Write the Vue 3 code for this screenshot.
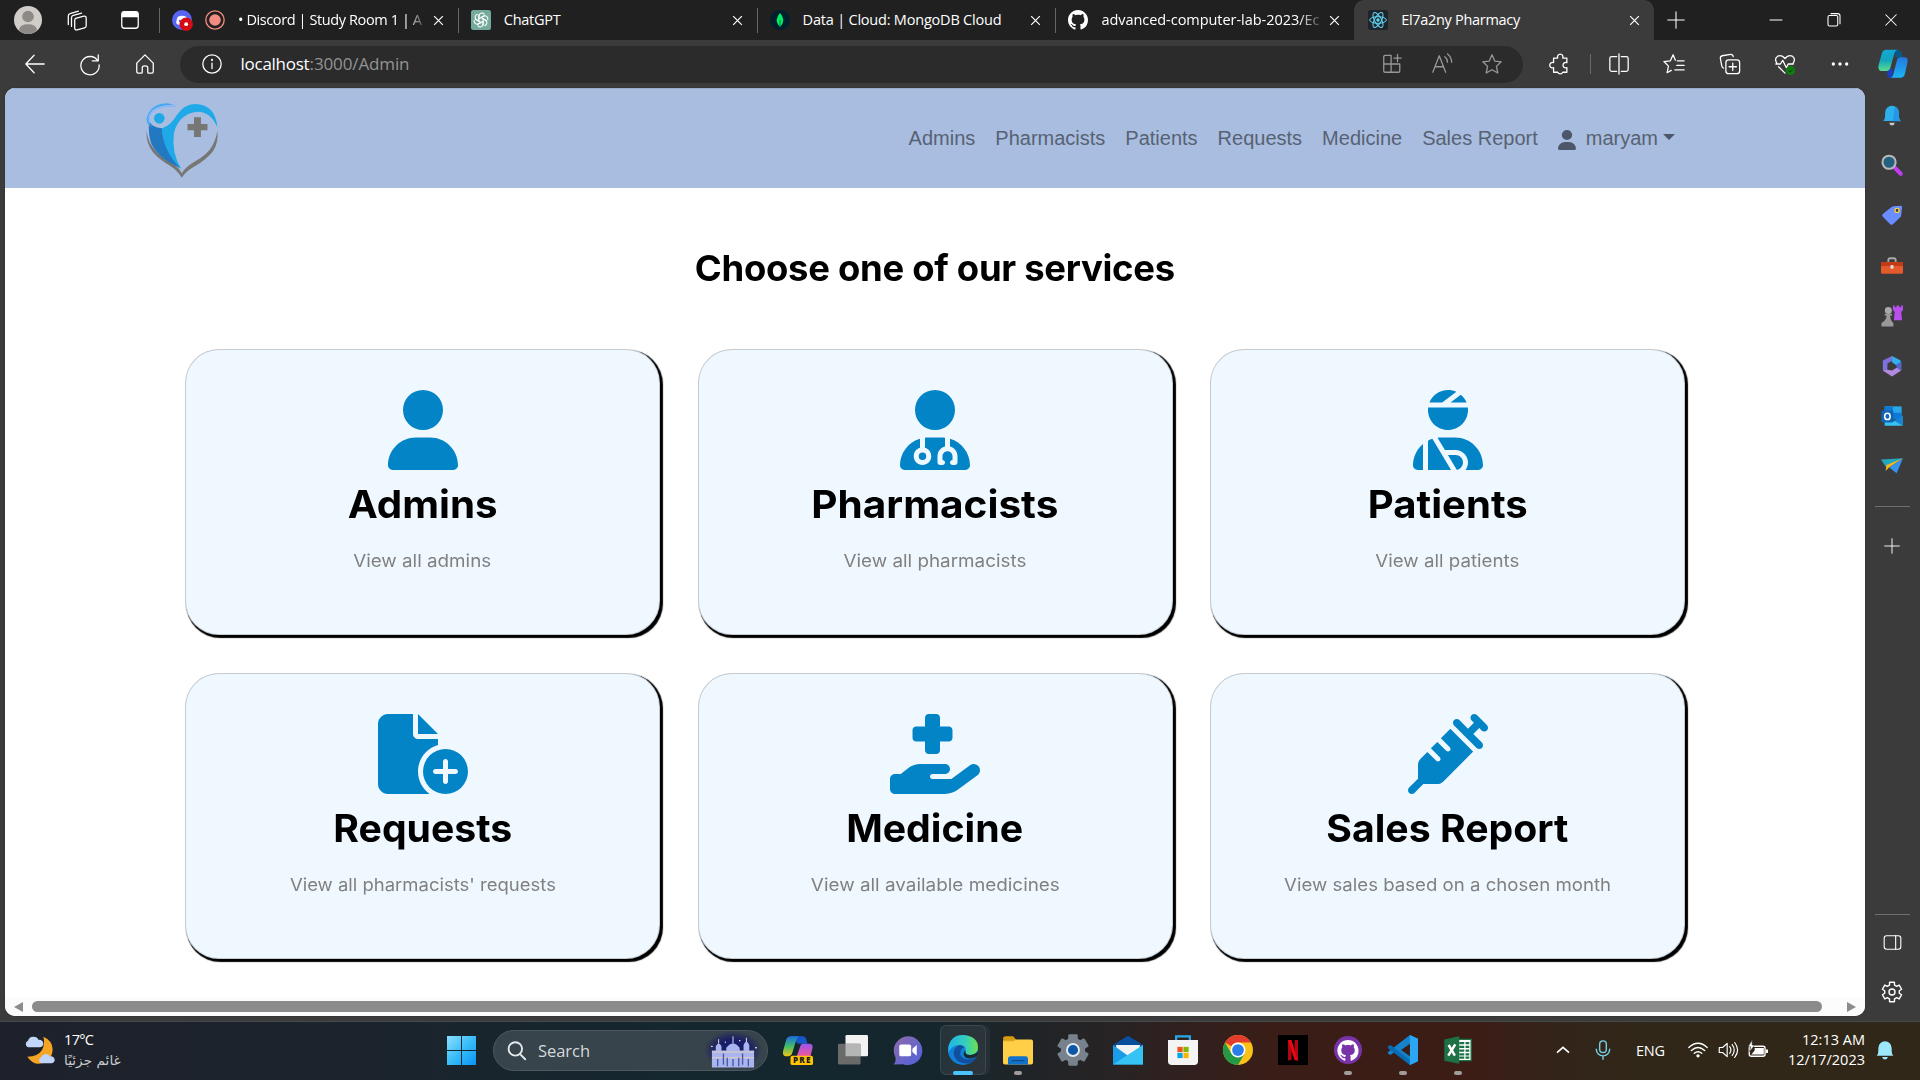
<script setup>
const vFit = {
  mounted(el, { value }) {
    const count = el.textContent.trim().length
    const natural = el.getBoundingClientRect().width
    if (!value || count < 2) return
    const spacing = (value - natural) / (count - 1)
    el.style.letterSpacing = spacing + 'px'
    el.style.marginRight = -spacing + 'px'
  }
}
// widens the glyphs themselves, keeping the text centred
const vWiden = {
  mounted(el, { value }) {
    el.style.transform = `scaleX(${value / el.getBoundingClientRect().width})`
  }
}

const tabs = [
  { title: '• Discord | Study Room 1 | A', icon: 'discord', record: true, fade: true, w: 184 },
  { title: 'ChatGPT', icon: 'gpt', w: 57 },
  { title: 'Data | Cloud: MongoDB Cloud', icon: 'mongo', w: 199 },
  { title: 'advanced-computer-lab-2023/Ec', icon: 'github', fade: true, w: 218 },
  { title: 'El7a2ny Pharmacy', icon: 'react', active: true, w: 119 }
]
const links = ['Admins', 'Pharmacists', 'Patients', 'Requests', 'Medicine', 'Sales Report']

const person = 'M224 256A128 128 0 1 0 224 0a128 128 0 1 0 0 256zm-45.7 48C79.8 304 0 383.8 0 482.3C0 498.7 13.3 512 29.7 512H418.3c16.4 0 29.7-13.3 29.7-29.7C448 383.8 368.2 304 269.7 304H178.3z'
const cards = [
  { title: 'Admins', tw: 150, text: 'View all admins', sw: 138, vw: 448, d: person },
  { title: 'Pharmacists', tw: 247, text: 'View all pharmacists', sw: 183, vw: 448, d: 'M224 256A128 128 0 1 0 224 0a128 128 0 1 0 0 256zm-96 55.2C54 332.9 0 401.3 0 482.3C0 498.7 13.3 512 29.7 512H418.3c16.4 0 29.7-13.3 29.7-29.7c0-81-54-149.4-128-171.1V362c27.6 7.1 48 32.2 48 62v40c0 8.8-7.2 16-16 16H336c-8.8 0-16-7.2-16-16s7.2-16 16-16V424c0-17.7-14.3-32-32-32s-32 14.3-32 32v24c8.8 0 16 7.2 16 16s-7.2 16-16 16H256c-8.8 0-16-7.2-16-16V424c0-29.8 20.4-54.9 48-62V304.9c-6-.6-12.1-.9-18.3-.9H178.3c-6.2 0-12.3 .3-18.3 .9v65.4c23.1 6.9 40 28.3 40 53.7c0 30.9-25.1 56-56 56s-56-25.1-56-56c0-25.4 16.9-46.8 40-53.7V311.2zM144 448a24 24 0 1 0 0-48 24 24 0 1 0 0 48z' },
  { title: 'Patients', tw: 160, text: 'View all patients', sw: 144, vw: 448, d: 'M240 80H342.7c-7.9-19.5-20.4-36.5-36.2-49.9L240 80zm37.7-68.2C261.3 4.2 243.2 0 224 0c-53.7 0-99.7 33.1-118.7 80h81.4l91-68.2zM224 256c70.7 0 128-57.3 128-128c0-5.4-.3-10.8-1-16H97c-.7 5.2-1 10.6-1 16c0 70.7 57.3 128 128 128zM124 312.4c-9.7 3.1-19.1 7-28 11.7V512H243.7L181.5 408.1 124 312.4zm33-7.2L204.3 384H272c44.2 0 80 35.8 80 80c0 18-6 34.6-16 48h82.3c16.4 0 29.7-13.3 29.7-29.7C448 383.8 368.2 304 269.7 304H178.3c-7.2 0-14.3 .4-21.3 1.3zM0 482.3C0 498.7 13.3 512 29.7 512H64V345.4C24.9 378.1 0 427.3 0 482.3zM320 464c0-26.5-21.5-48-48-48H223.5l57.1 95.2C303 507.2 320 487.6 320 464z' },
  { title: 'Requests', tw: 179, text: "View all pharmacists' requests", sw: 266, vw: 576, d: 'M0 64C0 28.7 28.7 0 64 0H224V128c0 17.7 14.3 32 32 32H384v38.6C310.1 219.5 256 287.4 256 368c0 59.1 29.1 111.3 73.7 143.3c-3.2 .5-6.4 .7-9.7 .7H64c-35.3 0-64-28.7-64-64V64zm384 64H256V0L384 128zm48 96a144 144 0 1 1 0 288 144 144 0 1 1 0-288zm16 80c0-8.8-7.2-16-16-16s-16 7.2-16 16v48H368c-8.8 0-16 7.2-16 16s7.2 16 16 16h48v48c0 8.8 7.2 16 16 16s16-7.2 16-16V384h48c8.8 0 16-7.2 16-16s-7.2-16-16-16H448V304z' },
  { title: 'Medicine', tw: 177, text: 'View all available medicines', sw: 249, vw: 576, d: 'M224 24V80H168c-13.3 0-24 10.7-24 24v48c0 13.3 10.7 24 24 24h56v56c0 13.3 10.7 24 24 24h48c13.3 0 24-10.7 24-24V176h56c13.3 0 24-10.7 24-24V104c0-13.3-10.7-24-24-24H320V24c0-13.3-10.7-24-24-24H248c-13.3 0-24 10.7-24 24zM559.7 392.2c17.8-13.1 21.6-38.1 8.5-55.9s-38.1-21.6-55.9-8.5L392.6 416H272c-8.8 0-16-7.2-16-16s7.2-16 16-16h16 64c17.7 0 32-14.3 32-32s-14.3-32-32-32H288 272 193.7c-29.1 0-57.3 9.9-80 28L68.8 384H32c-17.7 0-32 14.3-32 32v64c0 17.7 14.3 32 32 32H192 352.5c29 0 57.3-9.3 80.7-26.5l126.6-93.3z' },
  { title: 'Sales Report', tw: 242, text: 'View sales based on a chosen month', sw: 327, vw: 512, d: 'M441 7l32 32 32 32c9.4 9.4 9.4 24.6 0 33.9s-24.6 9.4-33.9 0l-15-15L417.9 128l55 55c9.4 9.4 9.4 24.6 0 33.9s-24.6 9.4-33.9 0l-72-72L295 73c-9.4-9.4-9.4-24.6 0-33.9s24.6-9.4 33.9 0l55 55L422.1 56 407 41c-9.4-9.4-9.4-24.6 0-33.9s24.6-9.4 33.9 0zM210.3 155.7l61.1-61.1c.3 .3 .6 .7 1 1l16 16 56 56 56 56 16 16c.3 .3 .6 .6 1 1l-191 191c-10.5 10.5-24.7 16.4-39.6 16.4H97.9L41 505c-9.4 9.4-24.6 9.4-33.9 0s-9.4-24.6 0-33.9l57-57V325.3c0-14.9 5.9-29.1 16.4-39.6l43.3-43.3 57 57c6.2 6.2 16.4 6.2 22.6 0s6.2-16.4 0-22.6l-57-57 41.4-41.4 57 57c6.2 6.2 16.4 6.2 22.6 0s6.2-16.4 0-22.6l-57-57z' }
]

const line = (s) => `<g fill="none" stroke="currentColor" stroke-width="1.4" stroke-linecap="round" stroke-linejoin="round">${s}</g>`
const cat = 'M8 0C3.58 0 0 3.58 0 8c0 3.54 2.29 6.53 5.47 7.59.4.07.55-.17.55-.38 0-.19-.01-.82-.01-1.49-2.01.37-2.53-.49-2.69-.94-.09-.23-.48-.94-.82-1.13-.28-.15-.68-.52-.01-.53.63-.01 1.08.58 1.23.82.72 1.21 1.87.87 2.33.66.07-.52.28-.87.51-1.07-1.78-.2-3.64-.89-3.64-3.95 0-.87.31-1.59.82-2.15-.08-.2-.36-1.02.08-2.12 0 0 .67-.21 2.2.82.64-.18 1.32-.27 2-.27s1.36.09 2 .27c1.53-1.04 2.2-.82 2.2-.82.44 1.1.16 1.92.08 2.12.51.56.82 1.27.82 2.15 0 3.07-1.87 3.75-3.65 3.95.29.25.54.73.54 1.48 0 1.07-.01 1.93-.01 2.2 0 .21.15.46.55.38A8.01 8.01 0 0 0 16 8c0-4.42-3.58-8-8-8z'
const gearPath = (() => {
  let d = ''
  for (let i = 0; i < 6; i++) {
    const pts = [[-20, 7.4], [-14, 10], [14, 10], [20, 7.4]]
    for (const [a, r] of pts) {
      const t = ((i * 60 + a - 90) * Math.PI) / 180
      d += (d ? 'L' : 'M') + (12 + r * Math.cos(t)).toFixed(2) + ' ' + (12 + r * Math.sin(t)).toFixed(2)
    }
  }
  return d + 'Z'
})()

// 24-unit icon bodies, keyed by name
const icons = {
  avatar: '<circle cx="12" cy="12" r="12" fill="#d0cdc9"/><circle cx="12" cy="9" r="5" fill="#8d8985"/><path d="M4.2 20.5Q5 15.6 12 15.6t7.8 4.9Q17 24 12 24t-7.8-3.5z" fill="#8d8985"/>',
  workspaces: line('<path d="M10.500 10.200l9-2.400q2.500-.5 2.500 2v8.400q0 1.800-1.800 2.300l-8 2.200q-2.700.6-2.700-2v-8.500q0-1.500 1-2z"/><path d="M6 19V9.500q0-2 2-2.500l9-2.600M2.500 17V7.500q0-2 2-2.500l9-2.600"/>'),
  tabmenu: line('<rect x="3" y="3" width="18" height="18" rx="3"/>') + '<path d="M3 9V5.500Q3 2.500 6 2.500h12q3 0 3 3V9z" fill="currentColor"/>',
  discord: '<circle cx="12" cy="12" r="12" fill="#5865f2"/><path d="M7 8q5-2.500 10 0 2 4 2 8-2 2-4 2l-1-1.500h-4L9 18q-2 0-4-2 0-4 2-8z" fill="#fff"/><circle cx="9.500" cy="13" r="1.400" fill="#5865f2"/><circle cx="17" cy="17" r="8" fill="#d90b12"/><circle cx="17" cy="17" r="2.300" fill="#fff"/>',
  record: '<circle cx="12" cy="12" r="11" fill="none" stroke="#f28b82" stroke-width="1.600"/><circle cx="12" cy="12" r="7" fill="#f28b82"/>',
  gpt: `<rect width="24" height="24" rx="3" fill="#74aa9c"/><g fill="none" stroke="#fff" stroke-width="1.300">${[0, 60, 120, 180, 240, 300].map((a) => `<path transform="rotate(${a} 12 12)" d="M9.500 13.500V7.200a3.600 3.600 0 0 1 6.500-2M12 9.100l4.500-2.600"/>`).join('')}</g>`,
  mongo: '<circle cx="12" cy="12" r="12" fill="#001e2b"/><path d="M12 3.500q4 4 4 8.500t-4 8q-4-3.500-4-8t4-8.500z" fill="#00ed64"/><path d="M12 12v9" stroke="#00684a" stroke-width="1"/>',
  github: `<path transform="scale(1.5)" fill="#fff" d="${cat}"/>`,
  react: '<rect width="24" height="24" rx="3" fill="#20232a"/><g fill="none" stroke="#61dafb" stroke-width="1.200"><ellipse cx="12" cy="12" rx="10" ry="4"/><ellipse cx="12" cy="12" rx="10" ry="4" transform="rotate(60 12 12)"/><ellipse cx="12" cy="12" rx="10" ry="4" transform="rotate(120 12 12)"/></g><circle cx="12" cy="12" r="2" fill="#61dafb"/>',
  close: line('<path d="M5 5l14 14M19 5L5 19"/>'),
  tabclose: '<path d="M4 4l16 16M20 4L4 20" fill="none" stroke="#fff" stroke-width="2.200"/>',
  plus: line('<path d="M12 1v22M1 12h22"/>'),
  min: line('<path d="M4 12h16"/>'),
  restore: line('<rect x="4" y="6" width="13" height="14" rx="2"/><path d="M8 3.500h9q3 0 3 3V17"/>'),
  back: line('<path d="M22 12H2M11 2.500L2 12l9 9.500"/>'),
  refresh: line('<path d="M20.500 8.500A10 10 0 1 0 22 13M21 2v6.500h-6.500"/>'),
  home: line('<path d="M3 11l9-9 9 9v9.500q0 1.500-1.500 1.500H16q-1 0-1-1v-5q0-2-3-2t-3 2v5q0 1-1 1H4.500Q3 22 3 20.500z"/>'),
  info: line('<circle cx="12" cy="12" r="10"/><path d="M12 11v6"/>') + '<circle cx="12" cy="7.500" r="1.200" fill="currentColor"/>',
  apps: line('<path d="M11 2.500H4.500Q3 2.500 3 4v15.500Q3 21 4.500 21H19q1.500 0 1.500-1.500V12H3M11 2.500V21M18 1.500v8M14 5.500h8"/>'),
  aloud: line('<path d="M2 21L9 3l7 18M4.500 15h9M15 4q3 2 3 6M18 1q4.500 3.500 4.500 9"/>'),
  star: line('<path d="M12 2l3 6.800 7 .8-5.200 5 1.500 7.200L12 18.200l-6.300 3.600 1.500-7.200L2 9.600l7-.8z"/>'),
  puzzle: line('<path d="M5 5.500h4.500a3 3 0 1 1 5.500 0h4.500v5a3 3 0 1 0 0 5.500v5H15a3 3 0 0 1-5.500 0H5v-5a3 3 0 1 1 0-5.500z"/>'),
  split: line('<path d="M12 1v22M9.500 4H4Q2 4 2 6v12q0 2 2 2h5.500M14.500 4H20q2 0 2 2v12q0 2-2 2h-5.500"/>'),
  favs: line('<path d="M13.500 7.800L11 2 8 8.500l-7 .8 5 5-1.500 7.200L9 19M15.500 8.500H23M15 13.500h8M13 18.500h10"/>'),
  collect: line('<rect x="7.500" y="7.500" width="15" height="15" rx="3"/><path d="M15 11v8M11 15h8M5 16.500Q3.500 16 3 14L1.500 6Q1.200 3.500 3.500 3l9-1.500q2.500-.3 3 2.500"/>'),
  heart: line('<path d="M3 11Q0 6 4 3.500 8.500 1.500 12 6q3.500-4.500 8-2.500 4 2.500 1 7.500M2 12h5l2.500-4 4 8 2-4H21M5 15l7 7"/>') + '<circle cx="18" cy="19" r="5" fill="#107c10"/><path d="M15.500 19l2 1.800 3-3.500" stroke="#053d05" fill="none"/>',
  dots: '<g fill="currentColor"><circle cx="4" cy="12" r="2"/><circle cx="12" cy="12" r="2"/><circle cx="20" cy="12" r="2"/></g>',
  copilot: '<defs><linearGradient id="ca" x2="0" y2="1"><stop stop-color="#11a8d8"/><stop offset=".5" stop-color="#12a5bd"/><stop offset="1" stop-color="#5bdc8c"/></linearGradient><linearGradient id="cb" x2="0" y2="1"><stop stop-color="#2378e0"/><stop offset="1" stop-color="#1cb5f5"/></linearGradient></defs><path d="M13 0.500h3q2 0 2.500 2l1.200 4H14z" fill="#075a88"/><path d="M7 16h5l-1 7H9.500Q8 23 7.500 21z" fill="#1b3fc0"/><path d="M6.500 .5H16q-2 0-3 3l-3 11q-.7 3-3.500 3H3Q0 17.500 .3 13.500L3 3.500q.8-3 3.500-3z" fill="url(#ca)"/><path d="M17.500 6.500H21q3 0 2.700 3.500L21.500 20q-.8 3-3.500 3H9.500q2 0 2.800-3L15 9.500q.7-3 2.500-3z" fill="url(#cb)"/>',
  bell: '<path d="M2.500 18.500q2-2 2-6V9.500a7.500 7.500 0 0 1 15 0v3q0 4 2 6z" fill="#2fb0ee"/><path d="M15 2.700q4.500 2 4.500 7v3q0 4 2 6H13z" fill="#2497e6"/><path d="M9 20.500h6q-.5 3-3 3t-3-3z" fill="#c8c8c8"/>',
  search: '<path d="M14 14l7.500 7.500" stroke="#c13cf0" stroke-width="4.500" stroke-linecap="round"/><circle cx="8.800" cy="9" r="7.200" fill="#23617f" stroke="#b8b8b8" stroke-width="2.200"/>',
  tag: '<path d="M13.500 2.500l8-.5q1.500 0 1.500 1.500l-1 9q0 1-1 2L13 22q-1.500 1.500-3 0l-8-8q-1.500-1.500 0-3l9.500-7.800z" fill="#6a8dff"/><circle cx="17.500" cy="7" r="2.200" fill="#333" stroke="#f9cf2a" stroke-width="1.500"/>',
  toolbox: '<path d="M8 8V5.500q0-2 2-2h4q2 0 2 2V8" fill="none" stroke="#a9a9a9" stroke-width="2"/><rect y="7.500" width="24" height="13" rx="1.500" fill="#e55a2b"/><path d="M0 9q0-1.500 1.500-1.500h21Q24 7.500 24 9v3H0z" fill="#c43a16"/><rect x="10.300" y="11" width="3.400" height="4" rx="1" fill="#ddd"/>',
  chess: '<path d="M13 0.500h2v2h2v-2h3v2h2v-2h2v5l-2 2 1 9h-9l1-9-2-2z" fill="#b950ee"/><circle cx="8" cy="6" r="3.800" fill="#aaa"/><path d="M4 9.500h8v2h-2q0 5.500 3.500 8v4h-13v-4Q6 17 6 11.500H4z" fill="#999"/>',
  m365: '<path d="M12 1l9.500 5v8L16 10.500 12 8z" fill="#2eb4ec"/><path d="M12 1L2 6v11l5 3V9l6-3z" fill="#7b72dd"/><path d="M2 17l10 6.500L22 17V8l-4.500 5.500L12 17l-5-1z" fill="#b28adf"/><path d="M22 7v10.500l-5-4V10z" fill="#5367d1"/>',
  outlook: '<rect x="4" y="1.500" width="18.500" height="14" fill="#28a8ea"/><path d="M4 1.500h9v7H4zM13 8.500h9.500v7H13z" fill="#0f78d4"/><path d="M4 13l10 5 9.500-6v10.500H4z" fill="#37c2f1"/><path d="M14 17l9.500-5v10.500z" fill="#1484d7"/><rect x=".5" y="6" width="13" height="13" rx="1.500" fill="#0f64b8"/><ellipse cx="7" cy="12.500" rx="3" ry="3.400" fill="none" stroke="#fff" stroke-width="1.700"/>',
  plane: '<path d="M0 5l24-1.500L6 14z" fill="#23a7bd"/><path d="M5 17.500L6 11 24 3.500 8.500 14z" fill="#f8b41d"/><path d="M24 3.500L9 13.500l8 6.500z" fill="#3493ef"/>',
  panel: line('<rect x="1.500" y="3.500" width="21" height="17" rx="3"/><path d="M16 3.500v17"/>'),
  gear: `<path d="${gearPath}" fill="none" stroke="currentColor" stroke-width="1.400" stroke-linejoin="round"/><circle cx="12" cy="12" r="3" fill="none" stroke="currentColor" stroke-width="1.400"/>`,
  windows: '<defs><linearGradient id="wn" x2="1" y2="1"><stop stop-color="#8be0ff"/><stop offset=".5" stop-color="#39bdf8"/><stop offset="1" stop-color="#0a93f5"/></linearGradient></defs><path d="M0 0h11.600v11.600H0zM12.400 0H24v11.600H12.400zM0 12.400h11.600V24H0zM12.400 12.400H24V24H12.400z" fill="url(#wn)"/>',
  lens: '<g fill="none" stroke="#e4e8ea" stroke-width="2.400" stroke-linecap="round"><circle cx="10.500" cy="10" r="8.500"/><path d="M16.500 16.500L23 23"/></g>',
  copre: '<defs><linearGradient id="cp" x2="0" y2="1"><stop stop-color="#1c6fe0"/><stop offset=".5" stop-color="#3fbb6a"/><stop offset="1" stop-color="#f2c614"/></linearGradient><linearGradient id="cq" x2="0" y2="1"><stop stop-color="#9a55ec"/><stop offset="1" stop-color="#f0569c"/></linearGradient></defs><path d="M6 1h10q2 0 2.500 2l1 4H12z" fill="#1557c8"/><path d="M6 1h7q-2 1-3 5L7.500 14q-.8 3-3.500 3H2q-2.500-.5-2-4L2.500 4Q3.500 1 6 1z" fill="url(#cp)"/><path d="M16 7h5q3 0 2.700 3L22 17H11l2.500-7q.8-3 2.500-3z" fill="url(#cq)"/><rect x="6" y="16.500" width="18" height="7.500" rx="1.500" fill="#ffc400"/><text x="15" y="22.500" font-family="Open Sans, sans-serif" font-weight="800" font-size="6.500" text-anchor="middle" fill="#1d1d1d" textLength="14">PRE</text>',
  taskview: '<rect x="6" width="18" height="17" rx="1" fill="#f2f2f2"/><rect y="7" width="18" height="16.500" rx="1" fill="#6a6a6a"/><path d="M6 7h12v10H6z" fill="#b4b6b6"/>',
  chat: '<defs><linearGradient id="ch" x2="1" y2="1"><stop stop-color="#8f6aa8"/><stop offset="1" stop-color="#4d62e0"/></linearGradient></defs><path d="M12 1a11.500 11.500 0 1 1-4 22.300L.5 23.500q2-2 1.500-5.500A11.500 11.500 0 0 1 12 1z" fill="url(#ch)"/><rect x="5" y="7.500" width="9.500" height="9.500" rx="1.500" fill="#fff"/><path d="M15.500 11l3.500-3v8.500l-3.500-3z" fill="#fff"/>',
  edge: '<defs><linearGradient id="eg" x2="1"><stop stop-color="#1fb4e8"/><stop offset=".6" stop-color="#36cfb9"/><stop offset="1" stop-color="#6ee04b"/></linearGradient></defs><circle cx="12" cy="12" r="12" fill="#1180d8"/><path d="M.3 10Q2 0 12 0q12 1 12 10 0 5-6 6-5 0-4-3 1-5-5-5Q3 8 .3 14z" fill="url(#eg)"/><path d="M9 8Q3 11 5 17t12 6q4-1 6-6-6 4-10 2t-3-6q1-3 3-3-1-2-4-2z" fill="#124f9f"/><path d="M14 12q-1 4 4 4 3 0 6-3 0 3-1 4-5 3-9 1-3-3 0-6z" fill="#1b2a31"/>',
  folder: '<path d="M0 3q0-2 2-2h6l2.500 2.500H0z" fill="#dc9a08"/><rect y="3.500" width="24" height="20" rx="1.500" fill="#ffcf48"/><path d="M0 5h8l3-1.500H0z" fill="#e0a414"/><path d="M4 23.500V19q0-2 2-2h12q2 0 2 2v4.500z" fill="#1272cc"/><path d="M7 20.500h10" stroke="#0c4c8f" stroke-width="1"/>',
  settings: `<g transform="translate(-2.400 -2.400) scale(1.200)"><path d="${gearPath}" fill="#78828d" stroke="#78828d" stroke-width="1.500" stroke-linejoin="round"/><circle cx="12" cy="12" r="4" fill="#0c57a8" stroke="#e5e9ee" stroke-width="1.300"/></g>`,
  mail: '<path d="M0 8l12-7.500L24 8v5H0z" fill="#0a4f9e"/><path d="M2.500 8h19v10h-19z" fill="#f1f3f4"/><path d="M0 8l12 8.500L24 8v15.500H0z" fill="#1a9de6"/><path d="M0 23.500L24 8v15.500z" fill="#35c3f3"/>',
  store: '<path d="M6.500 5V1h11v4" fill="none" stroke="#27a9e8" stroke-width="1.800"/><path d="M0 4h24v17q0 3-3 3H3q-3 0-3-3z" fill="#f4f4f4"/><path d="M7.500 9.500h4.200v4.200H7.500z" fill="#f1511b"/><path d="M12.300 9.500h4.200v4.200h-4.200z" fill="#80b900"/><path d="M7.500 14.300h4.200v4.200H7.500z" fill="#00a4ef"/><path d="M12.300 14.300h4.200v4.200h-4.200z" fill="#fbb700"/>',
  chrome: '<circle cx="12" cy="12" r="12" fill="#fbc116"/><path d="M1.600 6a12 12 0 0 1 20.800 0H12q-4 0-5.200 3z" fill="#e33b2e"/><path d="M1.600 6a12 12 0 0 0 10.400 18l5.200-9Q12 20 6.800 15z" fill="#249a47"/><circle cx="12" cy="12" r="6" fill="#fff"/><circle cx="12" cy="12" r="4.700" fill="#2b7de9"/>',
  netflix: '<path d="M0 0h24v24H0z" fill="#000"/><path d="M8 4h2.800v16L8 20.300zM13.300 4H16v16.300l-2.700-.3z" fill="#b1060f"/><path d="M8 4h2.800L16 20.300l-2.800-.4z" fill="#e50914"/>',
  desktop: `<circle cx="12" cy="12" r="11.200" fill="#7a32a8"/><g transform="translate(3.500 4) scale(1.060)"><path fill="#fff" d="${cat}"/></g>`,
  vscode: '<path d="M17.500 0L24 3v18l-6.500 3L6 13 2 16 0 15v-1.500L17.500 0z" fill="#1583cc"/><path d="M17.500 24L0 10.500V9l2-1 15.500 12z" fill="#0a6bb5"/><path d="M17.500 0L24 3v18l-6.500 3z" fill="#2ba6f2"/><path d="M17.500 7v10L10.500 12z" fill="#3b1d17"/>',
  excel: '<rect x="11" y="3.500" width="11.500" height="17" fill="#fff" stroke="#1e7145"/><path d="M13 6.500h8M13 9.500h8M13 12.500h8M13 15.500h8M13 18h8" stroke="#1e7145" stroke-width="1.800"/><path d="M17.500 4v16" stroke="#fff"/><path d="M1 3.500L13 1v22L1 20.500z" fill="#1e7145"/><path d="M4.500 8l5 8.500M9.800 7.500l-5.600 9" stroke="#fff" stroke-width="2"/>',
  chev: '<path d="M3 16l9-8 9 8" fill="none" stroke="#fff" stroke-width="2.500"/>',
  mic: '<g fill="none" stroke="#76cfe6" stroke-width="1.700" stroke-linecap="round"><rect x="8" y="1" width="8" height="14" rx="4"/><path d="M4 11a8 8 0 0 0 16 0M12 19v4"/></g>',
  wifi: '<g fill="none" stroke="#fff" stroke-width="1.700" stroke-linecap="round"><path d="M1 9q11-10 22 0M4 12.500q8-7 16 0M7.500 16q4.500-4 9 0"/></g><circle cx="12" cy="19" r="2" fill="#fff"/>',
  volume: line('<path d="M1.500 9h4L11 4v16l-5.500-5h-4zM14 8q3 4 0 8M17 5.500q5 6.500 0 13M20 3q7 9 0 18"/>'),
  battery: '<rect x="1.500" y="7.500" width="19" height="12" rx="2.500" fill="none" stroke="#fff" stroke-width="1.600"/><path d="M8 9.500h11v8H4l4-5zM21.500 11.500H24v4h-2.500z" fill="#fff"/><path d="M5 0L0 8h3l-1 6 6-8H5z" fill="#fff" stroke="#302718" stroke-width=".7"/>',
  notify: '<path d="M2 19q2-2 2-6v-3.500a8 8 0 0 1 16 0V13q0 4 2 6zM8.500 20.500h7q-1 3-3.500 3t-3.500-3z" fill="#9be8fb"/>',
  weather: '<path d="M14.500 2q7 3 7 9.500T16 21q-8 4-13.500-4 8 0 11-5 2.500-5 1-10z" fill="#f5a524"/><path d="M3 10a2.700 2.700 0 0 1 0-5 4.300 4.300 0 0 1 8-.5 2.800 2.800 0 1 1 .5 5.500z" fill="#c4d5fa"/><path d="M13 22a2.500 2.500 0 0 1 0-4.700 3.600 3.600 0 0 1 6.500-.5A2.700 2.700 0 1 1 21 22z" fill="#c0d3fb"/>',
  castle: '<g fill="#a9b5ee"><path d="M1 11h22v12H1z"/><path d="M3 12V8q1.500-4 3 0v4zM8.500 12V9q3.500-6 7 0v3zM17.500 12V7q1.500-5 3 0v5z"/></g><path d="M1 12h22M1 16h22" stroke="#e8d0c0" stroke-width=".7"/><path d="M4 17v5M7 13v8M9 16v6M12 17v5M15 16v6M17 13v8M20 17v5" stroke="#4a55a8" stroke-width=".7"/><path d="M12 1v5M4.500 3v3M19 2v3" stroke="#fff" stroke-width=".5"/><g fill="#fff"><circle cx="1" cy="8" r=".5"/><circle cx="8" cy="5" r=".4"/><circle cx="15.500" cy="4" r=".4"/><circle cx="24" cy="9" r=".5"/></g>'
}

const addressActions = ['apps', 'aloud', 'star']
const toolActions = ['split', 'favs', 'collect', 'heart', 'dots']
const sideApps = ['bell', 'search', 'tag', 'toolbox', 'chess', 'm365', 'outlook', 'plane']
const taskApps = [
  { i: 'copre' }, { i: 'taskview' }, { i: 'chat' }, { i: 'edge', active: true }, { i: 'folder', run: true },
  { i: 'settings' }, { i: 'mail' }, { i: 'store' }, { i: 'chrome' }, { i: 'netflix' },
  { i: 'desktop', run: true }, { i: 'vscode', run: true }, { i: 'excel', run: true }
]
</script>

<template>
  <div class="screen">
    <header class="tabbar">
      <div class="lead">
        <svg class="i28" viewBox="0 0 24 24" v-html="icons.avatar" />
        <svg class="i22" viewBox="0 0 24 24" v-html="icons.workspaces" />
        <svg class="i22" viewBox="0 0 24 24" v-html="icons.tabmenu" />
      </div>
      <div v-for="t in tabs" :key="t.title" class="tab" :class="{ active: t.active }">
        <svg class="i20" viewBox="0 0 24 24" v-html="icons[t.icon]" />
        <svg v-if="t.record" class="i20" viewBox="0 0 24 24" v-html="icons.record" />
        <div class="tabtext" :class="{ fade: t.fade }"><span v-fit="t.w">{{ t.title }}</span></div>
        <svg class="x" viewBox="0 0 24 24" v-html="icons.tabclose" />
      </div>
      <svg class="i18 newtab" viewBox="0 0 24 24" v-html="icons.plus" />
      <div class="wincontrols">
        <svg class="i18" viewBox="0 0 24 24" v-html="icons.min" />
        <svg class="i18" viewBox="0 0 24 24" v-html="icons.restore" />
        <svg class="i18" viewBox="0 0 24 24" v-html="icons.close" />
      </div>
    </header>

    <div class="toolbar">
      <div class="slot"><svg class="i22" viewBox="0 0 24 24" v-html="icons.back" /></div>
      <div class="slot"><svg class="i22" viewBox="0 0 24 24" v-html="icons.refresh" /></div>
      <div class="slot"><svg class="i22" viewBox="0 0 24 24" v-html="icons.home" /></div>
      <div class="address">
        <svg class="i22" viewBox="0 0 24 24" v-html="icons.info" />
        <div class="url"><span v-fit="69">localhost</span><span v-fit="100" class="dim">:3000/Admin</span></div>
        <div class="actions">
          <svg v-for="a in addressActions" :key="a" class="i22" viewBox="0 0 24 24" v-html="icons[a]" />
        </div>
      </div>
      <div class="ext"><svg class="i22" viewBox="0 0 24 24" v-html="icons.puzzle" /></div>
      <i class="sep" />
      <div v-for="a in toolActions" :key="a" class="slot"><svg :class="a === 'dots' ? 'i20' : 'i22'" viewBox="0 0 24 24" v-html="icons[a]" /></div>
      <div class="cop"><svg class="i30" viewBox="0 0 24 24" v-html="icons.copilot" /></div>
    </div>

    <div class="middle">
      <main class="page">
        <nav class="navbar">
          <svg class="logo" viewBox="355 305 180 230" preserveAspectRatio="none">
            <path d="M359 390Q361 425 380 450Q396 472 420 488Q437 500 445 519Q453 500 476 484Q508 463 520 436Q531 410 532 390Q536 425 522 452Q506 478 474 500Q456 512 445 532Q435 512 418 498Q390 478 374 455Q356 425 359 390Z" fill="#777775" />
            <path d="M365 360Q370 382 397 384Q398 440 442 504Q390 476 371 432Q362 405 365 360Z" fill="#2279c1" />
            <path d="M397 384Q418 375 433 344Q450 312 478 311Q527 312 532 380Q515 333 483 334Q438 340 426 397Q419 455 444 507Q400 455 396 384Z" fill="#20a9e8" />
            <path d="M359 355Q367 310 411 309L426 314Q394 312 374 330Q363 345 365 363Q366 376 375 382Q358 374 359 355Z" fill="#46a9ee" />
            <path d="M431 318Q391 313 374 332Q361 346 367 368" fill="none" stroke="#84b6ff" stroke-width="4" />
            <ellipse cx="390" cy="354" rx="13" ry="16" fill="#20a9e8" />
            <path d="M475 351h17v20h16v19h-16v20h-17v-20h-16v-19h16z" fill="#777775" />
          </svg>
          <div class="links">
            <a v-for="l in links" :key="l">{{ l }}</a>
            <a class="user"><svg viewBox="0 0 448 512" preserveAspectRatio="none"><path :d="person" fill="currentColor" /></svg>maryam<i class="caret" /></a>
          </div>
        </nav>
        <h1><span v-widen="480">Choose one of our services</span></h1>
        <section class="cards">
          <article v-for="c in cards" :key="c.title" class="card">
            <svg :viewBox="`0 0 ${c.vw} 512`"><path :d="c.d" fill="#0284c7" /></svg>
            <h2><span v-widen="c.tw">{{ c.title }}</span></h2>
            <p><span v-widen="c.sw">{{ c.text }}</span></p>
          </article>
        </section>
        <div class="scrollbar"><i class="al" /><b /><i class="ar" /></div>
      </main>
      <aside class="side">
        <div v-for="a in sideApps" :key="a" class="sslot"><svg class="i22" viewBox="0 0 24 24" v-html="icons[a]" /></div>
        <hr class="first">
        <svg class="i16" viewBox="0 0 24 24" v-html="icons.plus" />
        <hr class="second">
        <svg class="i19 pan" viewBox="0 0 24 24" v-html="icons.panel" />
        <svg class="i24" viewBox="0 0 24 24" v-html="icons.gear" />
      </aside>
    </div>

    <footer class="taskbar">
      <div class="weather">
        <svg class="i32" viewBox="0 0 24 24" v-html="icons.weather" />
        <div><span class="temp" v-fit="30">17°C</span><span class="cond" dir="rtl">غائم جزئيًا</span></div>
      </div>
      <div class="start"><svg class="i29" viewBox="0 0 24 24" v-html="icons.windows" /></div>
      <div class="searchbox">
        <svg class="i19" viewBox="0 0 24 24" v-html="icons.lens" />
        <span v-fit="52">Search</span>
        <div class="scene"><svg viewBox="0 0 24 24" preserveAspectRatio="none" v-html="icons.castle" /></div>
      </div>
      <div class="apps">
        <div v-for="a in taskApps" :key="a.i" class="app">
          <div class="tile" :class="{ on: a.active }"><svg class="i30" viewBox="0 0 24 24" v-html="icons[a.i]" /></div>
          <i v-if="a.active || a.run" class="mark" :class="{ on: a.active }" />
        </div>
      </div>
      <div class="tray">
        <svg class="i16 chev" viewBox="0 0 24 24" v-html="icons.chev" />
        <svg class="i20 mic" viewBox="0 0 24 24" v-html="icons.mic" />
        <span class="lang"><span v-fit="29">ENG</span></span>
        <svg class="i20 status" viewBox="0 0 24 24" v-html="icons.wifi" />
        <svg class="i20 status" viewBox="0 0 24 24" v-html="icons.volume" />
        <svg class="i20 status" viewBox="0 0 24 24" v-html="icons.battery" />
        <div class="clock"><div><span v-fit="63">12:13 AM</span></div><div><span v-fit="77">12/17/2023</span></div></div>
        <svg class="i20 note" viewBox="0 0 24 24" v-html="icons.notify" />
      </div>
    </footer>
  </div>
</template>

<style>
body { background: #3b3b3b; overflow: hidden; }
</style>

<style scoped>
* { box-sizing: border-box; }
svg { display: block; flex: none; overflow: visible; }
.screen { width: 1920px; height: 1080px; display: flex; flex-direction: column; background: #3b3b3b; color: #fff; font-family: "Open Sans", "Noto Sans", sans-serif; }
span { display: inline-block; white-space: nowrap; }
.i16 { width: 16px; height: 16px; } .i18 { width: 18px; height: 18px; } .i19 { width: 19px; height: 19px; }
.i20 { width: 20px; height: 20px; } .i22 { width: 22px; height: 22px; } .i24 { width: 24px; height: 24px; } .i28 { width: 28px; height: 28px; }
.i29 { width: 29px; height: 29px; } .i30 { width: 30px; height: 30px; } .i32 { width: 32px; height: 32px; }

.tabbar { height: 40px; background: #202020; display: flex; align-items: center; flex: none; }
.lead { width: 159px; padding-left: 14px; display: flex; align-items: center; }
.lead svg + svg { margin-left: 24px; }
.lead svg:last-child { margin-left: 31px; }
.tab { width: 298.800px; height: 40px; padding: 0 13px 0 13px; display: flex; align-items: center; font-size: 14.500px; }
.tab:not(.active)::before { content: ""; width: 1px; height: 25px; background: #666; margin: 0 0 0 -13px; }
.tab:not(.active) > svg:first-of-type { margin-left: 12px; }
.tab > .i20 + .i20 { margin-left: 13px; }
.tab.active { background: #3b3b3b; border-radius: 10px 10px 0 0; width: 300px; padding-left: 14px; }
.tabtext { margin-left: 13px; overflow: hidden; flex: 1; line-height: 24px; height: 24px; }
.tabtext.fade { -webkit-mask-image: linear-gradient(90deg, #000 90%, #0003 100%); mask-image: linear-gradient(90deg, #000 90%, #0003 100%); }
.x { width: 13px; height: 13px; margin-left: 8px; }
.newtab { margin-left: 13px; }
.wincontrols { margin-left: auto; width: 153px; padding-right: 20px; display: flex; justify-content: space-between; }

.toolbar { height: 48px; display: flex; align-items: center; padding-left: 7px; flex: none; }
.slot { width: 55.200px; display: flex; justify-content: center; }
.address { width: 1343px; height: 37px; margin-left: 7px; border-radius: 19px; background: #2b2b2b; display: flex; align-items: center; padding: 0 20px 0 21px; }
.url { margin-left: 18px; font-size: 17px; line-height: 30px; }
.dim { color: #949494; }
.actions { margin-left: auto; display: flex; gap: 28px; color: #989898; }
.ext { width: 67px; display: flex; justify-content: center; padding-left: 7px; }
.sep { width: 1px; height: 20px; background: #6b6b6b; }
.toolbar .sep + .slot { margin-left: 1px; }
.cop { margin-left: 10px; }

.middle { height: 928px; display: flex; padding-left: 5px; flex: none; }
.page { width: 1860px; background: #fff; border-radius: 10px; overflow: hidden; display: flex; flex-direction: column; color: #000; box-shadow: 0 0 2px #2229; }
.navbar { height: 100px; background: #a9bde0; display: flex; align-items: center; padding: 0 190px 0 140px; border-top: 1px solid #98aecd; flex: none; }
.logo { width: 73.500px; height: 76.700px; margin-top: 4px; }
.links { margin: -2px 0 0 auto; display: flex; gap: 20px; font: 20px/30px "Liberation Sans", Arial, sans-serif; color: #576273; }
.user { display: flex; align-items: center; }
.user svg { width: 18px; height: 20px; margin: 4px 10px 0 0; color: #4c586a; }
.caret { border: 6px solid transparent; border-top-color: #4c586a; border-bottom: 0; margin: -2px 0 0 5px; }
h1, h2, p { margin: 0; font-family: Inter, "Open Sans", sans-serif; text-align: center; }
h1 { font-size: 36px; line-height: 48px; font-weight: 700; margin-top: 56px; letter-spacing: -.3px; }
.cards { display: grid; grid-template-columns: repeat(3, 475px); column-gap: 37.500px; row-gap: 37.500px; margin: 57px 0 0 180px; }
.card { height: 286px; background: #f0f8ff; border: 1px solid rgba(0, 0, 0, .18); border-radius: 34px; box-shadow: 2px 2px 1px .3px #000; display: flex; flex-direction: column; align-items: center; padding-top: 40px; }
.card svg { height: 80px; width: auto; }
h2 { font-size: 38px; line-height: 48px; font-weight: 700; margin-top: 10px; }
p { font-size: 17.500px; line-height: 24px; color: #808080; margin-top: 21px; }
.scrollbar { height: 19px; margin-top: auto; background: #fcfcfc; display: flex; align-items: center; padding: 0 9px 0 9px; justify-content: space-between; flex: none; }
.scrollbar b { width: 1790px; height: 11px; border-radius: 6px; background: #8b8b8b; margin-left: 2px; }
.al { border: 5.500px solid transparent; border-right: 9px solid #8b8b8b; border-left: 0; }
.ar { border: 5.500px solid transparent; border-left: 9px solid #8b8b8b; border-right: 0; margin-left: 18px; }

.side { width: 54px; display: flex; flex-direction: column; align-items: center; padding-top: 2px; }
.sslot { height: 50.200px; display: flex; align-items: center; }
hr { width: 35px; height: 1px; border: 0; background: #6f6f6f; margin: 0; flex: none; }
.first { margin: 14px 0 31px; }
.second { margin-top: 360px; }
.pan { margin: 18px 0 28px; }

.taskbar { height: 59px; margin-top: 5px; padding-bottom: 2px; display: flex; align-items: center; background: linear-gradient(90deg, #1e212b 0, #1b242c 380px, #14272f 700px, #15262d 930px, #282324 1110px, #3a1d16 1280px, #3b1d16 1480px, #33241a 1560px, #302718 1650px, #302718); border-top: 1px solid #444a4c; flex: none; }
.weather { display: flex; width: 447px; padding-left: 24px; align-items: center; }
.weather div { margin-left: 8px; display: flex; flex-direction: column; align-items: flex-start; line-height: 20px; font-size: 14.500px; }
.cond { font-family: "DejaVu Sans", sans-serif; font-size: 13.700px; color: #c8cacc; }
.start { width: 46px; }
.searchbox { width: 275px; height: 41px; border-radius: 21px; background: #37444b; border: 1px solid #4b575d; display: flex; align-items: center; padding: 0 5px 0 13px; font-size: 16.500px; color: #d5d9db; }
.searchbox > span { margin-left: 12px; }
.scene { width: 58px; height: 38px; margin-left: auto; border-radius: 20px; background: radial-gradient(closest-side, #191c66 55%, #1d225500); display: flex; align-items: flex-end; justify-content: center; }
.scene svg { width: 46px; height: 34px; }
.apps { display: flex; margin-left: 2px; }
.app { width: 55px; height: 57px; display: flex; align-items: center; justify-content: center; position: relative; }
.tile { width: 46px; height: 50px; display: flex; align-items: center; justify-content: center; border-radius: 6px; border: 1px solid transparent; }
.tile.on { background: #ffffff12; border-color: #ffffff18; box-shadow: 4px 0 0 #ffffff0c; }
.mark { position: absolute; bottom: 4px; left: 23.500px; width: 8px; height: 4px; border-radius: 2px; background: #a19b99; }
.mark.on { left: 17.500px; width: 20px; background: #4cc2ff; }
.tray { margin-left: auto; display: flex; align-items: center; padding-right: 25px; font-size: 14.500px; }
.mic { margin-left: 22px; }
.lang { margin: 0 23px 0 23px; }
.status + .status { margin-left: 10px; }
.clock { text-align: right; line-height: 20px; width: 97px; }
.note { margin-left: 10px; }
</style>
